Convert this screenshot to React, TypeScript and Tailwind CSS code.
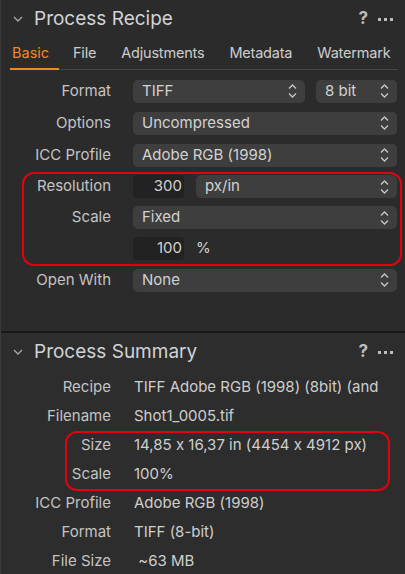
import React from "react"

const Updown = () => (
  <svg width="9" height="16" viewBox="0 0 9 16" className="shrink-0">
    <path d="M1 5.5 L4.5 2 L8 5.5" fill="none" stroke="#c8c8c8" strokeWidth="1.3" />
    <path d="M1 10.5 L4.5 14 L8 10.5" fill="none" stroke="#c8c8c8" strokeWidth="1.3" />
  </svg>
)

const Chevron = () => (
  <svg width="10" height="6" viewBox="0 0 10 6" className="shrink-0">
    <path d="M1 1 L5 5 L9 1" fill="none" stroke="#a8a8a8" strokeWidth="1.3" />
  </svg>
)

const Select = ({ value, className = "" }: { value: string; className?: string }) => (
  <div
    className={
      "h-[23px] rounded-[5px] bg-[#3e3e3e] flex items-center justify-between pl-[9px] pr-[8px] text-[15px] text-[#d2d2d2] " +
      className
    }
  >
    <span>{value}</span>
    <Updown />
  </div>
)

const NumBox = ({ value }: { value: string }) => (
  <div className="h-[23px] w-[51px] rounded-[4px] bg-[#222222] flex items-center justify-end pr-[2px] text-[15px] text-[#d2d2d2]">
    {value}
  </div>
)

const Row = ({ label, h, children }: { label: string; h: string; children?: React.ReactNode }) => (
  <div className={"flex items-center " + h}>
    <div className="w-[110px] text-right text-[15px] text-[#c4c4c4] shrink-0">{label}</div>
    <div className="flex-1 flex items-center ml-[22px] mr-[8px]">{children}</div>
  </div>
)

const PanelHeader = ({ title }: { title: string }) => (
  <div className="h-[36px] shrink-0 flex items-center pl-[12px] pr-[12px]">
    <Chevron />
    <span className="ml-[11px] text-[19px] text-[#d0d3d7]">{title}</span>
    <div className="ml-auto flex items-center gap-[10px] text-[#bdbdbd]">
      <span className="text-[17px] font-bold">?</span>
      <span className="flex gap-[3px]">
        <span className="w-[3px] h-[3px] bg-[#bdbdbd]" />
        <span className="w-[3px] h-[3px] bg-[#bdbdbd]" />
        <span className="w-[3px] h-[3px] bg-[#bdbdbd]" />
      </span>
    </div>
  </div>
)

const SumRow = ({ label, value }: { label: string; value: string }) => (
  <div className="flex items-center h-[29px] shrink-0">
    <div className="w-[110px] text-right text-[15px] text-[#c4c4c4] shrink-0">{label}</div>
    <div className="ml-[23px] text-[15px] text-[#cfcfcf] whitespace-pre overflow-hidden">{value}</div>
  </div>
)

export default function App() {
  const tabs = ["File", "Adjustments", "Metadata", "Watermark"]
  return (
    <div className="w-[405px] h-[574px] overflow-hidden bg-[#2b2b2b] border-l border-[#3a3a3a] pt-[1px] font-[Inter,sans-serif] [font-feature-settings:'calt'_0] flex flex-col">
      {/* Process Recipe */}
      <div className="h-[330px] shrink-0 flex flex-col">
        <PanelHeader title="Process Recipe" />
        <div className="h-[33px] flex items-end pl-[9px] pr-[7px]">
          <div className="flex-1 flex items-end border-b border-[#484848]">
            <div className="px-[2px] pb-[4px] border-b-2 border-[#f0891f] -mb-px w-[49px] text-[14.5px] text-[#f0891f]">Basic</div>
            <div className="flex gap-[25px] ml-[14px] pb-[5px] text-[14.5px] text-[#cdcdcd] tracking-[-0.2px] whitespace-nowrap">
              {tabs.map(t => (
                <span key={t}>{t}</span>
              ))}
            </div>
          </div>
        </div>
        <div className="h-[5px]" />
        <Row label="Format" h="h-[32px]">
          <Select value="TIFF" className="flex-1" />
          <Select value="8 bit" className="w-[81px] ml-[11px]" />
        </Row>
        <Row label="Options" h="h-[32px]">
          <Select value="Uncompressed" className="flex-1" />
        </Row>
        <Row label="ICC Profile" h="h-[32px]">
          <Select value="Adobe RGB (1998)" className="flex-1" />
        </Row>
        <div className="relative">
          <Row label="Resolution" h="h-[31px]">
            <NumBox value="300" />
            <Select value="px/in" className="flex-1 ml-[12px]" />
          </Row>
          <Row label="Scale" h="h-[31px]">
            <Select value="Fixed" className="flex-1" />
          </Row>
          <Row label="" h="h-[31px]">
            <NumBox value="100" />
            <span className="ml-[12px] text-[15px] text-[#d2d2d2]">%</span>
          </Row>
          <div className="absolute left-[21px] right-[3px] top-[1px] -bottom-[2px] border-2 border-[#e3000f] rounded-[12px]" />
        </div>
        <Row label="Open With" h="h-[32px]">
          <Select value="None" className="flex-1" />
        </Row>
      </div>
      <div className="h-[2px] shrink-0 bg-[#181818]" />
      {/* Process Summary */}
      <div className="flex-1 shrink-0 bg-[#2d2d2d] flex flex-col">
        <div className="h-[1px] shrink-0" />
        <PanelHeader title="Process Summary" />
        <div className="h-[3px] shrink-0" />
        <SumRow label="Recipe" value="TIFF Adobe RGB (1998) (8bit) (and" />
        <SumRow label="Filename" value="Shot1_0005.tif" />
        <div className="relative shrink-0">
          <SumRow label="Size" value="14,85 x 16,37 in (4454 x 4912 px)" />
          <SumRow label="Scale" value="100%" />
          <div className="absolute left-[64px] right-[15px] top-[0px] -bottom-[2px] border-2 border-[#e3000f] rounded-[12px]" />
        </div>
        <SumRow label="ICC Profile" value="Adobe RGB (1998)" />
        <SumRow label="Format" value="TIFF (8-bit)" />
        <SumRow label="File Size" value=" ~63 MB" />
      </div>
    </div>
  )
}
